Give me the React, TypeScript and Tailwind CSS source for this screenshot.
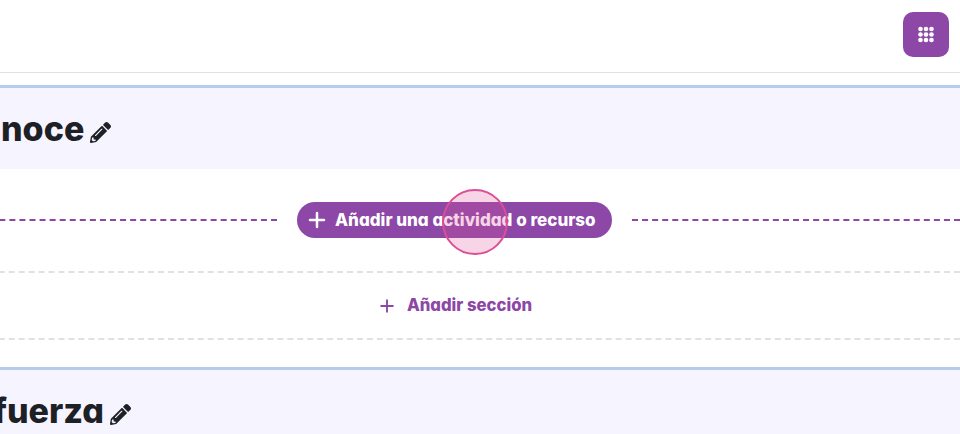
import { Plus } from "lucide-react";
import { FaPencilAlt } from "react-icons/fa";

const font = "font-['Inter','Liberation_Sans',sans-serif] [font-feature-settings:'cv11']";

function SectionHeader({ title, offset }: { title: string; offset: string }) {
  return (
    <div className="flex h-[84px] items-center gap-1.5 border-t-[3px] border-[#b5cdea] bg-[#f6f4fe]">
      <h2 className={`text-[34px] leading-none font-extrabold text-[#1d2125] ${offset}`}>{title}</h2>
      <FaPencilAlt className="mt-2 text-[21px] text-[#1d2125]" />
    </div>
  );
}

function GridDots() {
  return (
    <svg width="18" height="18" viewBox="0 0 18 18" fill="#fff">
      {[3.5, 9, 14.5].flatMap((x) =>
        [3, 8.5, 14].map((y) => <circle key={`${x}-${y}`} cx={x} cy={y} r="2.3" />)
      )}
    </svg>
  );
}

export default function App() {
  return (
    <div className={`relative h-[434px] w-[960px] overflow-hidden bg-white ${font}`}>
      {/* Top bar */}
      <div className="flex h-[73px] items-start justify-end border-b border-[#dee2e6] pt-3 pr-[11px]">
        <button className="flex h-[45px] w-[46px] items-center justify-center rounded-[10px] bg-[#8c47a7]">
          <GridDots />
        </button>
      </div>

      <div className="mt-3">
        <SectionHeader title="noce" offset="ml-px" />
      </div>

      {/* Add activity */}
      <div className="-ml-[51px] flex h-[102px] items-center">
        <div className="flex-1 border-t-2 border-dashed border-[#8c47a7]" />
        <button className="mx-5 flex h-9 w-[315px] items-center gap-1.5 rounded-full bg-[#8c47a7] pl-2 text-[17px] font-extrabold text-white">
          <Plus size={24} strokeWidth={2.5} />
          <span className="pt-0.5">Añadir una actividad o recurso</span>
        </button>
        <div className="flex-1 border-t-2 border-dashed border-[#8c47a7]" />
      </div>

      {/* Add section */}
      <div className="-ml-[51px] flex h-[69px] items-center justify-center gap-[10px] border-y-2 border-dashed border-[#dee2e6] text-[16.7px] font-extrabold text-[#8c47a7]">
        <Plus size={20} strokeWidth={2.25} />
        Añadir sección
      </div>

      <div className="mt-[27px]">
        <SectionHeader title="fuerza" offset="-ml-[7px]" />
      </div>

      {/* Click marker */}
      <div className="absolute top-[189px] left-[442px] size-[66px] rounded-full border-2 border-[#db4f94] bg-[#e0559a]/25" />
    </div>
  );
}
